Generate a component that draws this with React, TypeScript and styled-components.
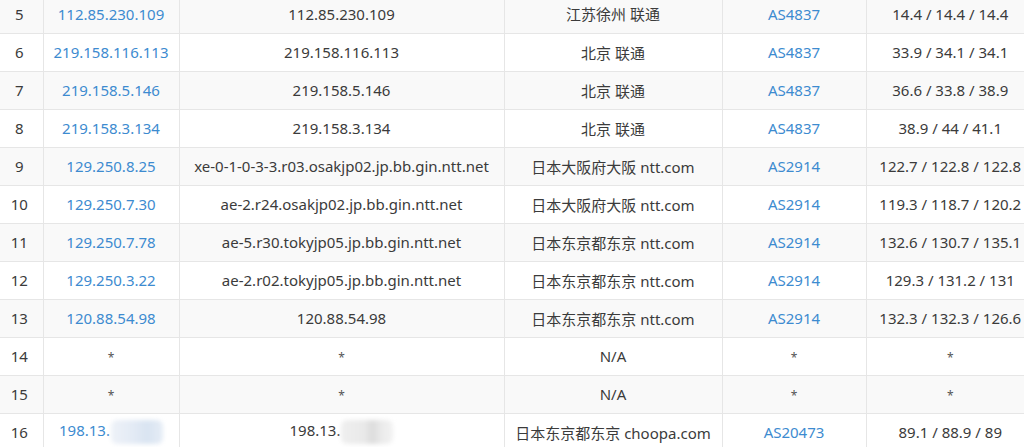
import React from "react";
import styled, { createGlobalStyle } from "styled-components";

const GlobalStyle = createGlobalStyle`
  html, body {
    margin: 0;
    padding: 0;
    background: #ffffff;
    overflow: hidden;
  }
  body {
    font-family: "Noto Sans", "Open Sans", "Noto Sans CJK SC", sans-serif;
  }
`;

const Viewport = styled.div`
  width: 1024px;
  height: 447px;
  overflow: hidden;
`;

const Table = styled.table`
  border-collapse: collapse;
  table-layout: fixed;
  width: 1034px;
  font-size: 15px;
  color: #3b3b3b;
`;

const Row = styled.tr<{ $shaded: boolean; $clipped: boolean }>`
  height: ${(p) => (p.$clipped ? "33px" : "38px")};
  background: ${(p) => (p.$shaded ? "#f9f9f9" : "#ffffff")};
  & > td {
    height: ${(p) => (p.$clipped ? "33px" : "38px")};
    padding-bottom: ${(p) => (p.$clipped ? "5px" : "0")};
    border-top: ${(p) => (p.$clipped ? "none" : "1px solid #e6e6e6")};
  }
`;

const Cell = styled.td<{ $link?: boolean }>`
  box-sizing: border-box;
  padding: 0 6px;
  text-align: center;
  vertical-align: middle;
  white-space: nowrap;
  overflow: hidden;
  border-bottom: 1px solid #e6e6e6;
  border-left: 1px solid #e6e6e6;
  color: ${(p) => (p.$link ? "#3d8bd0" : "#3b3b3b")};
  font-family: "Noto Sans", "Noto Sans CJK SC", sans-serif;
  &:first-child {
    border-left: none;
    padding-left: 0;
    padding-right: 4px;
  }
`;

const Star = styled.span`
  font-size: 12px;
  color: #555;
`;

const Blur = styled.span<{ $tone: "blue" | "gray" }>`
  display: inline-block;
  vertical-align: middle;
  width: 52px;
  height: 24px;
  margin-left: 1px;
  border-radius: 6px;
  filter: blur(2px);
  background: ${(p) =>
    p.$tone === "blue"
      ? "linear-gradient(90deg, #eef2f8 0%, #e4ebf5 40%, #d9e4f1 70%, #e6edf6 100%)"
      : "linear-gradient(90deg, #efefef 0%, #e9e9e9 45%, #dcdcdc 60%, #ececec 80%, #f2f2f2 100%)"};
`;

type Hop = {
  n: number;
  ip: string;
  host: string;
  loc: string;
  as: string;
  time: string;
  masked?: boolean;
};

const hops: Hop[] = [
  { n: 5, ip: "112.85.230.109", host: "112.85.230.109", loc: "江苏徐州 联通", as: "AS4837", time: "14.4 / 14.4 / 14.4" },
  { n: 6, ip: "219.158.116.113", host: "219.158.116.113", loc: "北京 联通", as: "AS4837", time: "33.9 / 34.1 / 34.1" },
  { n: 7, ip: "219.158.5.146", host: "219.158.5.146", loc: "北京 联通", as: "AS4837", time: "36.6 / 33.8 / 38.9" },
  { n: 8, ip: "219.158.3.134", host: "219.158.3.134", loc: "北京 联通", as: "AS4837", time: "38.9 / 44 / 41.1" },
  { n: 9, ip: "129.250.8.25", host: "xe-0-1-0-3-3.r03.osakjp02.jp.bb.gin.ntt.net", loc: "日本大阪府大阪 ntt.com", as: "AS2914", time: "122.7 / 122.8 / 122.8" },
  { n: 10, ip: "129.250.7.30", host: "ae-2.r24.osakjp02.jp.bb.gin.ntt.net", loc: "日本大阪府大阪 ntt.com", as: "AS2914", time: "119.3 / 118.7 / 120.2" },
  { n: 11, ip: "129.250.7.78", host: "ae-5.r30.tokyjp05.jp.bb.gin.ntt.net", loc: "日本东京都东京 ntt.com", as: "AS2914", time: "132.6 / 130.7 / 135.1" },
  { n: 12, ip: "129.250.3.22", host: "ae-2.r02.tokyjp05.jp.bb.gin.ntt.net", loc: "日本东京都东京 ntt.com", as: "AS2914", time: "129.3 / 131.2 / 131" },
  { n: 13, ip: "120.88.54.98", host: "120.88.54.98", loc: "日本东京都东京 ntt.com", as: "AS2914", time: "132.3 / 132.3 / 126.6" },
  { n: 14, ip: "*", host: "*", loc: "N/A", as: "*", time: "*" },
  { n: 15, ip: "*", host: "*", loc: "N/A", as: "*", time: "*" },
  { n: 16, ip: "198.13.", host: "198.13.", loc: "日本东京都东京 choopa.com", as: "AS20473", time: "89.1 / 88.9 / 89", masked: true },
];

const colWidths = [43, 136, 325, 218, 144, 168];

function Val({ v }: { v: string }) {
  return v === "*" ? <Star>*</Star> : <>{v}</>;
}

export default function App() {
  return (
    <Viewport>
      <GlobalStyle />
      <Table>
        <colgroup>
          {colWidths.map((w, i) => (
            <col key={i} style={{ width: w }} />
          ))}
        </colgroup>
        <tbody>
          {hops.map((h, i) => (
            <Row key={h.n} $shaded={h.n % 2 === 1} $clipped={i === 0}>
              <Cell>{h.n}</Cell>
              <Cell $link={h.ip !== "*"}>
                <Val v={h.ip} />
                {h.masked && <Blur $tone="blue" />}
              </Cell>
              <Cell>
                <Val v={h.host} />
                {h.masked && <Blur $tone="gray" />}
              </Cell>
              <Cell>{h.loc}</Cell>
              <Cell $link={h.as !== "*"}>
                <Val v={h.as} />
              </Cell>
              <Cell>
                <Val v={h.time} />
              </Cell>
            </Row>
          ))}
        </tbody>
      </Table>
    </Viewport>
  );
}
